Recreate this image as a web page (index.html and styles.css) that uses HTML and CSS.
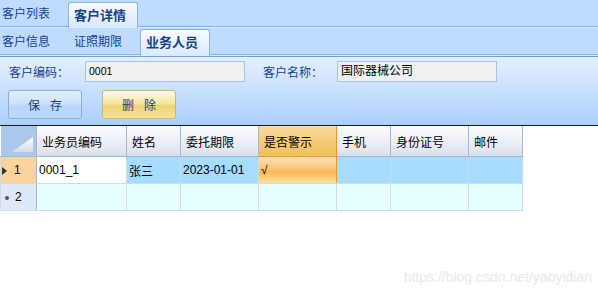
FILE: index.html
```html
<!DOCTYPE html>
<html lang="zh-CN">
<head>
    <meta charset="UTF-8">
    <title>客户详情</title>
    <link rel="stylesheet" href="styles.css">
</head>
<body>
    <!-- main tabs -->
    <div class="tabbar top-tabs">
        <div class="tab first">客户列表</div>
        <div class="tab active">客户详情</div>
    </div>

    <!-- detail tabs -->
    <div class="tabbar sub-tabs">
        <div class="tab first">客户信息</div>
        <div class="tab">证照期限</div>
        <div class="tab active">业务人员</div>
    </div>

    <div class="panel">
        <div class="form-row">
            <label class="field-label">客户编码：</label>
            <div class="field-box num">0001</div>
            <label class="field-label second">客户名称：</label>
            <div class="field-box">国际器械公司</div>
        </div>
        <div class="button-row">
            <button class="btn btn-save">保&nbsp;&nbsp;&nbsp;存</button>
            <button class="btn btn-delete">删&nbsp;&nbsp;&nbsp;除</button>
        </div>
    </div>

    <div class="grid-wrap">
        <table class="grid">
            <colgroup>
                <col style="width:36px">
                <col style="width:90px">
                <col style="width:54px">
                <col style="width:78px">
                <col style="width:78px">
                <col style="width:54px">
                <col style="width:78px">
                <col style="width:54px">
            </colgroup>
            <thead>
                <tr>
                    <th class="corner"><div class="corner-box"><span class="corner-tri"></span></div></th>
                    <th>业务员编码</th>
                    <th>姓名</th>
                    <th>委托期限</th>
                    <th class="hot">是否警示</th>
                    <th>手机</th>
                    <th>身份证号</th>
                    <th>邮件</th>
                </tr>
            </thead>
            <tbody>
                <tr class="selected">
                    <td class="row-head current"><span class="arrow"></span>1</td>
                    <td class="editing num">0001_1</td>
                    <td>张三</td>
                    <td class="num">2023-01-01</td>
                    <td class="hot-cell">√</td>
                    <td></td>
                    <td></td>
                    <td></td>
                </tr>
                <tr class="new-row">
                    <td class="row-head"><span class="star"></span>2</td>
                    <td></td>
                    <td></td>
                    <td></td>
                    <td></td>
                    <td></td>
                    <td></td>
                    <td></td>
                </tr>
            </tbody>
        </table>
    </div>

    <div class="watermark">https://blog.csdn.net/yaoyidian</div>
</body>
</html>
```

FILE: styles.css
```css
body {
    margin: 0;
    padding: 0;
    width: 598px;
    height: 296px;
    overflow: hidden;
    background: #fff;
    font-family: "Liberation Sans", "Noto Sans CJK SC", sans-serif;
    font-size: 12px;
    color: #000;
}

/* tab strips */
.tabbar {
    display: flex;
    align-items: flex-end;
}
.top-tabs {
    height: 28px;
    background: linear-gradient(to bottom, #bfdbff 0, #bfdbff 26px, #7eb4ea 26px, #7eb4ea 27px, #dcebff 27px);
}
.sub-tabs {
    height: 29px;
    background: linear-gradient(to bottom, #bfdbff 0, #bfdbff 26px, #7eb4ea 26px, #7eb4ea 27px, #dcebff 27px, #dcebff 28px, #6a9fe0 28px);
}
.tab {
    box-sizing: border-box;
    width: 70px;
    height: 27px;
    margin-left: 2px;
    padding: 5px 0 0 6px;
    color: #15428b;
    font-size: 12px;
    line-height: 16px;
}
.tab.first {
    width: 66px;
    margin-left: 0;
    padding-left: 2px;
}
.sub-tabs .tab {
    height: 28px;
}
.tab.active {
    height: 26px;
    border: 1px solid #8db2e3;
    border-bottom: none;
    border-radius: 3px 3px 0 0;
    background: linear-gradient(to bottom, #f7fbff, #dbe9fd);
    font-weight: bold;
    font-size: 13px;
    padding-left: 5px;
}
.sub-tabs .tab.active {
    height: 27px;
    margin-bottom: 1px;
}

/* form panel */
.panel {
    box-sizing: border-box;
    height: 68px;
    padding: 4px 0 0 8px;
    background: linear-gradient(to bottom, #e4f0ff, #aacffe);
}
.form-row {
    display: flex;
    align-items: center;
    height: 21px;
}
.field-label {
    width: 76px;
    color: #15428b;
    font-size: 12px;
    padding-left: 1px;
}
.field-label.second {
    width: 74px;
    margin-left: 17px;
}
.field-box {
    box-sizing: border-box;
    width: 160px;
    height: 21px;
    border: 1px solid #a8c4e4;
    background: #f0f0f0;
    padding: 2px 0 0 3px;
    font-size: 12px;
    line-height: 15px;
}
.num {
    font-size: 10.5px;
}
.button-row {
    display: flex;
    gap: 20px;
    margin-top: 8px;
}
.btn {
    box-sizing: border-box;
    width: 74px;
    height: 29px;
    border-radius: 3px;
    font-family: inherit;
    font-size: 12px;
    color: #15428b;
    padding: 0;
    cursor: pointer;
}
.btn-save {
    border: 1px solid #8eaed3;
    background: linear-gradient(to bottom, #e2eefd 0%, #cfe3fc 45%, #b9d6fb 55%, #bcd8fb 100%);
}
.btn-delete {
    border: 1px solid #c9b776;
    background: linear-gradient(to bottom, #fffbe0 0%, #f6e7a3 45%, #ecd577 55%, #f4e39a 100%);
}

/* grid */
.grid-wrap {
    border-top: 1px solid #1a1a1a;
}
.grid {
    border-collapse: collapse;
    table-layout: fixed;
    width: 522px;
}
.grid th {
    height: 30px;
    padding: 0 0 0 5px;
    text-align: left;
    font-weight: normal;
    font-size: 12px;
    background: linear-gradient(to bottom, #fbfcfd, #e9edf4 60%, #d9dfeb);
    border-right: 1px solid #a2b9d3;
    border-bottom: 1px solid #a2b9d3;
}
.grid th.hot {
    background: linear-gradient(to bottom, #f9dca2, #f3c871 60%, #f1c05e);
    border: 1px solid #f29536;
    border-top: none;
}
.grid th.corner {
    padding: 0;
    background: #abc8ec;
    border-right: 1px solid #a2b9d3;
}
.corner-box {
    display: flex;
    justify-content: flex-end;
    align-items: flex-end;
    height: 30px;
    padding: 0 3px 4px 0;
    box-sizing: border-box;
}
.corner-tri {
    width: 21px;
    height: 15px;
    background: linear-gradient(to bottom, #ffffff, #d3dbe6);
    clip-path: polygon(100% 0, 100% 100%, 0 100%);
}
.grid td {
    height: 26px;
    padding: 0 0 0 2px;
    border: 1px solid #d0dcea;
    font-size: 12px;
}
.grid tr.selected td {
    background: #a6dcfe;
}
.grid tr.new-row td {
    background: #e6ffff;
}
.grid td.row-head {
    padding-left: 1px;
    border-right: 1px solid #a2b9d3;
    background: #dde6f4;
}
.grid tr.selected td.row-head {
    background: #fbd49b;
}
.grid tr.new-row td.row-head {
    background: #dfe8f6;
}
.grid tr.selected td.editing {
    background: #fff;
}
.grid tr.selected td.hot-cell {
    background: linear-gradient(to bottom, #fde0b8 0%, #fdc87d 40%, #fdb552 55%, #fee3a2 100%);
    border-left: 1px solid #f29536;
    border-right: 1px solid #f29536;
}
.arrow {
    display: inline-block;
    width: 0;
    height: 0;
    border-top: 4px solid transparent;
    border-bottom: 4px solid transparent;
    border-left: 5px solid #333;
    margin-right: 7px;
    vertical-align: -1px;
}
.star {
    display: inline-block;
    width: 4px;
    height: 4px;
    border-radius: 50%;
    background: #555;
    margin: 0 6px 0 3px;
    vertical-align: 1px;
}

.watermark {
    text-align: right;
    padding-right: 6px;
    margin-top: 58px;
    font-size: 14px;
    color: #e9e9e9;
}
```
